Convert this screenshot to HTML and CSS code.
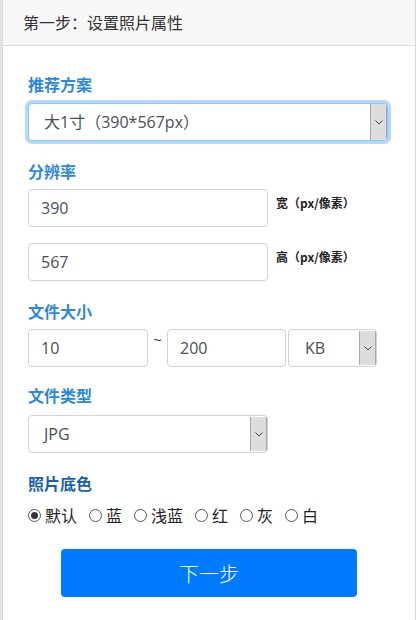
FILE: index.html
```html
<!DOCTYPE html>
<html lang="zh-CN">
<head>
<meta charset="utf-8">
<title>设置照片属性</title>
<link rel="stylesheet" href="styles.css">
</head>
<body>
<div class="card">
  <div class="card-header">第一步：设置照片属性</div>
  <div class="card-body">
    <div class="group g1">
      <div class="label">推荐方案</div>
      <div class="select focus w-full">
        <span class="select-value">大1寸（390*567px）</span>
        <span class="select-btn"><svg width="8" height="5" viewBox="0 0 8 5"><polyline points="0.5,0.5 4,4 7.5,0.5" fill="none" stroke="#444" stroke-width="1"/></svg></span>
      </div>
    </div>
    <div class="group g2">
      <div class="label">分辨率</div>
      <div class="dim-row">
        <input class="input w-240" type="text" value="390">
        <span class="unit">宽（px/像素）</span>
      </div>
      <div class="dim-row second">
        <input class="input w-240" type="text" value="567">
        <span class="unit">高（px/像素）</span>
      </div>
    </div>
    <div class="group g3">
      <div class="label">文件大小</div>
      <div class="size-row">
        <input class="input w-120" type="text" value="10">
        <span class="tilde">~</span>
        <input class="input w-119" type="text" value="200">
        <div class="select w-89 ml-2">
          <span class="select-value kb">KB</span>
          <span class="select-btn"><svg width="8" height="5" viewBox="0 0 8 5"><polyline points="0.5,0.5 4,4 7.5,0.5" fill="none" stroke="#444" stroke-width="1"/></svg></span>
        </div>
      </div>
    </div>
    <div class="group g4">
      <div class="label">文件类型</div>
      <div class="select w-240">
        <span class="select-value">JPG</span>
        <span class="select-btn"><svg width="8" height="5" viewBox="0 0 8 5"><polyline points="0.5,0.5 4,4 7.5,0.5" fill="none" stroke="#444" stroke-width="1"/></svg></span>
      </div>
    </div>
    <div class="group g5">
      <div class="label dark">照片底色</div>
      <div class="radios">
        <label class="radio"><span class="dot checked"></span>默认</label>
        <label class="radio"><span class="dot"></span>蓝</label>
        <label class="radio"><span class="dot"></span>浅蓝</label>
        <label class="radio"><span class="dot"></span>红</label>
        <label class="radio"><span class="dot"></span>灰</label>
        <label class="radio"><span class="dot"></span>白</label>
      </div>
    </div>
    <div class="actions">
      <button class="btn-next" type="button">下一步</button>
    </div>
  </div>
</div>
</body>
</html>
```

FILE: styles.css
```css
* { box-sizing: border-box; }
html, body { margin: 0; padding: 0; }
body {
  background: #e4e4e4;
  padding-left: 2px;
  font-family: "Open Sans", "Noto Sans CJK SC", sans-serif;
  color: #333;
  height: 620px;
  overflow: hidden;
}
.card {
  width: 414px;
  height: 620px;
  background: #fff;
  border-left: 1px solid #d8d8d8;
  border-right: 1px solid #d8d8d8;
}
.card-header {
  height: 46px;
  background: #f7f7f7;
  border-bottom: 1px solid #dcdcdc;
  padding-left: 20px;
  font-family: "Noto Sans CJK SC", sans-serif;
  font-size: 16px;
  line-height: 45px;
  color: #333;
}
.card-body {
  padding: 26px 25px 0 25px;
}
.label {
  font-family: "Noto Sans CJK SC", sans-serif;
  font-size: 16px;
  font-weight: bold;
  line-height: 24px;
  height: 24px;
  color: #2b88dd;
}
.label.dark { color: #1b5fa8; }
.g1 .label { margin-bottom: 7px; }
.g2 { margin-top: 18px; }
.g2 .label { margin-bottom: 6px; }
.g3 { margin-top: 18px; }
.g3 .label { margin-bottom: 6px; }
.g4 { margin-top: 16px; }
.g4 .label { margin-bottom: 8px; }
.g5 { margin-top: 18px; }
.g5 .label { margin-bottom: 8px; }

.input {
  height: 38px;
  border: 1px solid #ced4da;
  border-radius: 4px;
  padding: 0 12px;
  font-family: "Open Sans", "Noto Sans CJK SC", sans-serif;
  font-size: 16px;
  color: #495057;
  background: #fff;
  outline: none;
}
.w-240 { width: 240px; }
.w-120 { width: 120px; }
.w-119 { width: 119px; }
.w-89 { width: 89px; }
.w-full { width: 360px; }
.ml-2 { margin-left: 2px; }

.select {
  display: flex;
  height: 38px;
  border: 1px solid #ced4da;
  border-radius: 4px;
  background: #fff;
  overflow: hidden;
}
.select.focus {
  border-color: #8cc3fb;
  box-shadow: 0 0 0 3px #b5d8fc;
}
.select-value {
  flex: 1;
  padding-left: 15px;
  font-family: "Open Sans", "Noto Sans CJK SC", sans-serif;
  font-size: 16px;
  line-height: 36px;
  color: #495057;
  white-space: nowrap;
}
.select-value.kb { padding-left: 16px; }
.select-btn {
  width: 17px;
  background: #dddddd;
  border-left: 1px solid #a8a8a8;
  border-right: 1px solid #a8a8a8;
  display: flex;
  align-items: center;
  justify-content: center;
  margin: 1px 0;
}
.select.focus .select-btn { margin: 0; }

.dim-row {
  display: flex;
  align-items: flex-start;
}
.dim-row.second { margin-top: 16px; }
.unit {
  margin-left: 8px;
  margin-top: 6px;
  font-family: "Noto Sans CJK SC", sans-serif;
  font-size: 12px;
  font-weight: bold;
  line-height: 16px;
  color: #222;
}
.size-row {
  display: flex;
  align-items: flex-start;
}
.tilde {
  width: 19px;
  text-align: center;
  font-family: "Liberation Sans", sans-serif;
  font-size: 14px;
  line-height: 16px;
  color: #333;
  margin-top: 3px;
}

.radios {
  display: flex;
  align-items: center;
  height: 24px;
}
.radio {
  display: flex;
  align-items: center;
  font-family: "Noto Sans CJK SC", sans-serif;
  font-size: 16px;
  line-height: 24px;
  color: #222;
  margin-right: 12px;
}
.dot {
  width: 13px;
  height: 13px;
  border: 1px solid #555;
  border-radius: 50%;
  margin-right: 4px;
  display: flex;
  align-items: center;
  justify-content: center;
}
.dot.checked::after {
  content: "";
  width: 7px;
  height: 7px;
  border-radius: 50%;
  background: #333;
}

.actions {
  display: flex;
  justify-content: center;
  margin-top: 22px;
}
.btn-next {
  width: 296px;
  height: 48px;
  border: none;
  border-radius: 4px;
  background: #007bff;
  color: #fff;
  font-family: "Noto Sans CJK SC", sans-serif;
  font-size: 20px;
  font-weight: 300;
  cursor: pointer;
}
```
